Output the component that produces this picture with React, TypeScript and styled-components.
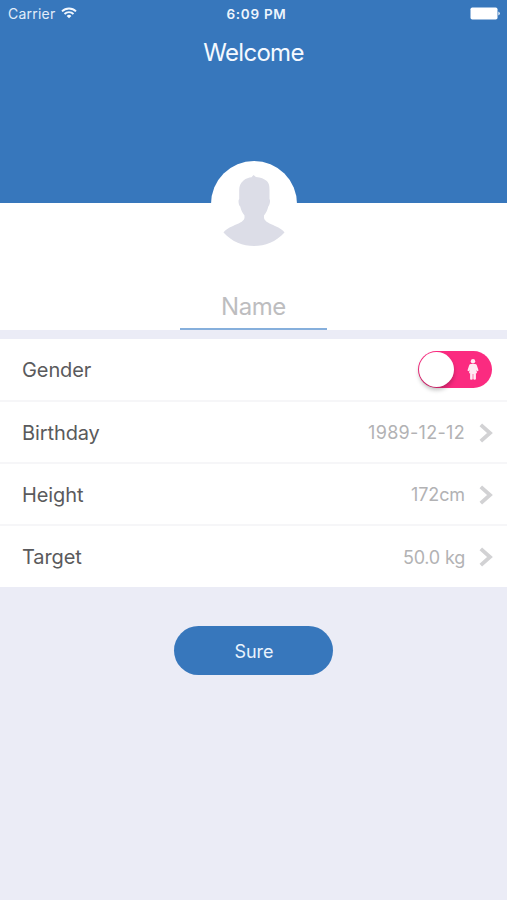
import React, { useState } from "react";
import styled, { createGlobalStyle } from "styled-components";

const BLUE = "#3777bc";

const GlobalStyle = createGlobalStyle`
  * { box-sizing: border-box; }
  body {
    margin: 0;
    background: #ebecf6;
    font-family: Inter, "Liberation Sans", sans-serif;
  }
`;

const Screen = styled.main`
  width: 507px;
  height: 900px;
  display: flex;
  flex-direction: column;
  background: #ebecf6;
  overflow: hidden;
`;

const Header = styled.header`
  height: 203px;
  flex: none;
  background: ${BLUE};
  color: #fff;
`;

const StatusBar = styled.div`
  height: 27px;
  padding: 0 7px 0 8px;
  display: grid;
  grid-template-columns: 1fr auto 1fr;
  align-items: center;
`;

const Carrier = styled.div`
  display: flex;
  align-items: center;
  gap: 6px;
  font-size: 14px;
  letter-spacing: 0.22px;
  color: #e2edfa;
`;

const Clock = styled.div`
  font-size: 13.5px;
  font-weight: 600;
  letter-spacing: 0.7px;
  padding-left: 5px;
  color: #eef5fd;
`;

const BatterySlot = styled.div`
  display: flex;
  justify-content: flex-end;
`;

const Title = styled.h1`
  margin: 9px 0 0;
  line-height: 34px;
  font-size: 24px;
  font-weight: 400;
  letter-spacing: -0.7px;
  text-align: center;
  color: #f4f9ff;
`;

const Profile = styled.section`
  height: 127px;
  flex: none;
  display: flex;
  flex-direction: column;
  align-items: center;
  background: #fff;
`;

const Avatar = styled.div`
  width: 86px;
  height: 86px;
  flex: none;
  margin-top: -42px;
  border-radius: 50%;
  background: #fff;
  display: flex;
  justify-content: center;
  padding-top: 14px;
`;

const NameInput = styled.input`
  width: 147px;
  height: 45px;
  margin-top: 38px;
  padding: 0;
  border: 0;
  border-bottom: 2px solid #86afdc;
  outline: 0;
  background: transparent;
  font: 400 24px Inter, sans-serif;
  letter-spacing: -0.45px;
  text-align: center;
  color: #555;
  &::placeholder { color: #bdbdbf; opacity: 1; }
`;

const Rows = styled.section`
  height: 248px;
  margin-top: 9px;
  flex: none;
  display: grid;
  grid-template-rows: 63px 62px 62px 61px;
  background: #fff;
`;

const Row = styled.div`
  display: flex;
  align-items: center;
  padding: 1px 14px 0 22px;
  border-bottom: 2px solid #f6f6f8;
  &:last-child { border-bottom: 0; }
`;

const Label = styled.span`
  flex: 1;
  font-size: 20px;
  letter-spacing: -0.1px;
  color: #5a5a5c;
`;

const Value = styled.span<{ $tracking: number }>`
  font-size: 18px;
  letter-spacing: ${(p) => p.$tracking}px;
  margin-right: 14px;
  color: #b2b2b4;
`;

const Switch = styled.button`
  width: 74px;
  height: 37px;
  margin: 0 1px 1px 0;
  padding: 1px;
  border: 0;
  border-radius: 19px;
  background: #fb2b80;
  display: flex;
  align-items: center;
`;

const Knob = styled.span`
  width: 35px;
  height: 35px;
  border-radius: 50%;
  background: #fff;
  box-shadow: 0 3px 4px rgba(0, 0, 0, 0.25);
  margin-right: 13px;
`;

const SureButton = styled.button`
  width: 159px;
  height: 49px;
  margin: 39px auto 0;
  padding: 2px 0 0 1px;
  border: 0;
  border-radius: 25px;
  background: ${BLUE};
  color: #e9f3fd;
  font: 400 18px Inter, sans-serif;
  letter-spacing: -0.1px;
`;

const WifiIcon = () => (
  <svg width="16" height="13" viewBox="0 0 16 13" fill="none" stroke="#f2f8ff" strokeWidth="1.9">
    <path d="M1 4.4a10 10 0 0 1 14 0M3.5 7a6.4 6.4 0 0 1 9 0" />
    <path d="M8 11.300 5.600 8.900a3.500 3.500 0 0 1 4.800 0Z" fill="#f2f8ff" stroke="none" />
  </svg>
);

const BatteryIcon = () => (
  <svg width="30" height="13" viewBox="0 0 30 13" fill="#fff">
    <rect x="0.5" y="0.5" width="27" height="12" rx="1.8" />
    <path d="M28.3 4.5q1.7.8 1.7 2t-1.7 2Z" opacity="0.85" />
  </svg>
);

const PersonIcon = () => (
  <svg width="62" height="72" viewBox="0 0 62 72" fill="#dcdde7">
    <path d="M30.500 0 33 2C38 2.200 41 3.800 43.500 5.800C46.500 8.500 46.500 12 46.500 15V24C47.600 25 46.800 30 45.300 31.500C44.500 35 43 38 41 40.500V43C42 47 47 48.500 52 51C57 53.200 60 55 61.500 57.500C53 67 42 71 31 71S9 67 .5 57.500C2 55 5 53.200 10 51C15 48.500 20.500 47 21.500 43V40.500C19.500 38 18 35 17.200 31.500C15.500 30 15 25 16.200 24V15C16.200 11 17.500 8 20.500 5.500C23 3.200 26 2.500 28.500 2.200Z" />
  </svg>
);

const FemaleIcon = () => (
  <svg width="12" height="21" viewBox="0 0 12 21" fill="#ffeaf3">
    <circle cx="6" cy="2.300" r="2.200" />
    <path d="M4 5h4q1.400.1 1.800 1.300L11.400 11q.2.900-.5 1.100t-1-.5L9.500 10.700l.5 3.600H8.900V20q0 .8-1.200.8T6.300 20v-5h-.6v5q0 .8-1.400.8T3.100 20v-5.700H2l.5-3.600-.4.900q-.3.700-1 .5T.6 11l1.600-4.700Q2.600 5.100 4 5Z" />
  </svg>
);

const Chevron = () => (
  <svg width="14" height="20" viewBox="0 0 14 20" fill="none" stroke="#d2d2d4" strokeWidth="3.800">
    <path d="m1.800 1.800 9.200 8.200-9.200 8.200" />
  </svg>
);

const details = [
  { label: "Birthday", value: "1989-12-12", tracking: 0.3 },
  { label: "Height", value: "172cm", tracking: -0.1 },
  { label: "Target", value: "50.0 kg", tracking: -0.2 },
];

export default function App() {
  const [name, setName] = useState("");
  return (
    <>
      <GlobalStyle />
      <Screen>
        <Header>
          <StatusBar>
            <Carrier>Carrier <WifiIcon /></Carrier>
            <Clock>6:09 PM</Clock>
            <BatterySlot><BatteryIcon /></BatterySlot>
          </StatusBar>
          <Title>Welcome</Title>
        </Header>
        <Profile>
          <Avatar><PersonIcon /></Avatar>
          <NameInput placeholder="Name" value={name} onChange={(e) => setName(e.target.value)} />
        </Profile>
        <Rows>
          <Row>
            <Label>Gender</Label>
            <Switch role="switch" aria-checked="false" aria-label="Gender"><Knob /><FemaleIcon /></Switch>
          </Row>
          {details.map((d) => (
            <Row key={d.label}>
              <Label>{d.label}</Label>
              <Value $tracking={d.tracking}>{d.value}</Value>
              <Chevron />
            </Row>
          ))}
        </Rows>
        <SureButton>Sure</SureButton>
      </Screen>
    </>
  );
}
